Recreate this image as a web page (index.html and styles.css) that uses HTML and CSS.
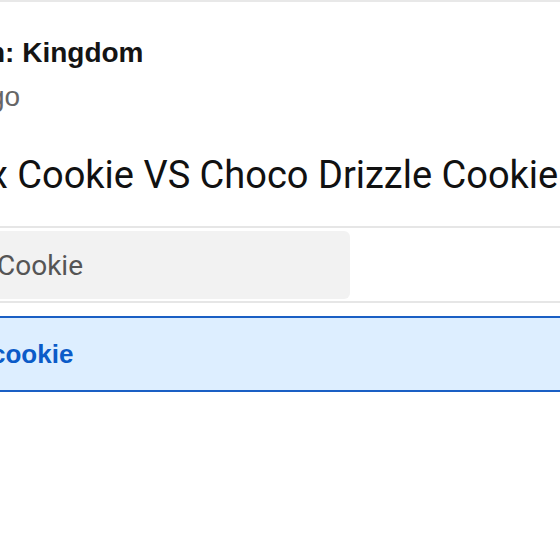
FILE: index.html
```html
<!DOCTYPE html>
<html lang="en">
<head>
<meta charset="utf-8">
<title>Poll</title>
<link rel="stylesheet" href="styles.css">
</head>
<body>
<div class="page">
  <header class="header">
    <div class="title">n: Kingdom</div>
    <div class="meta">go</div>
  </header>
  <h1 class="headline">x Cookie VS Choco Drizzle Cookie</h1>
  <div class="field-row">
    <div class="field">Cookie</div>
  </div>
  <div class="option">
    <span class="option-label">cookie</span>
  </div>
</div>
</body>
</html>
```
FILE: styles.css
```css
html, body {
  margin: 0;
  padding: 0;
  background: #ffffff;
  overflow: hidden;
}

body {
  font-family: "Liberation Sans", Arial, sans-serif;
  width: 560px;
}

.page {
  border-top: 2px solid #e8e8e8;
  overflow: hidden;
}

.header {
  padding-top: 34px;
}

.title {
  margin-left: -12px;
  font-weight: 700;
  font-size: 28px;
  line-height: 34px;
  color: #141414;
  white-space: nowrap;
}

.meta {
  margin-top: 11px;
  margin-left: -11px;
  font-size: 28px;
  line-height: 32px;
  color: #666666;
  white-space: nowrap;
}

.headline {
  margin: 40px 0 0 -11px;
  font-family: Roboto, "Liberation Sans", sans-serif;
  font-weight: 400;
  font-size: 38px;
  line-height: 44px;
  color: #111111;
  white-space: nowrap;
}

.field-row {
  margin-top: 29px;
  border-top: 2px solid #e6e6e6;
  border-bottom: 2px solid #e6e6e6;
  padding: 3px 0 2px;
}

.field {
  margin-left: -20px;
  width: 370px;
  height: 68px;
  box-sizing: border-box;
  padding-left: 17px;
  background: #f2f2f2;
  border-radius: 6px;
  display: flex;
  align-items: center;
  font-family: Roboto, "Liberation Sans", sans-serif;
  font-size: 28px;
  color: #555555;
}

.option {
  margin-top: 13px;
  height: 72px;
  border-top: 2px solid #1a5fc4;
  border-bottom: 2px solid #1a5fc4;
  background: #ddeeff;
  display: flex;
  align-items: center;
}

.option-label {
  margin-left: -9px;
  font-weight: 700;
  font-size: 26px;
  color: #0b5bc8;
  white-space: nowrap;
}
```
